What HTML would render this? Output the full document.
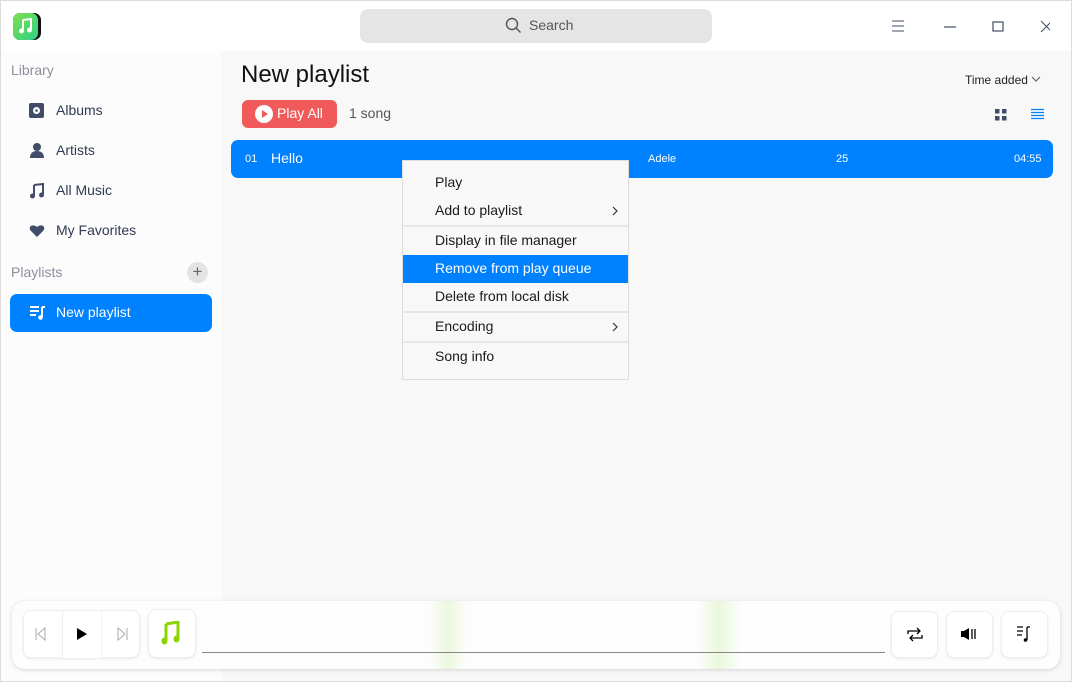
<!DOCTYPE html>
<html><head><meta charset="utf-8"><style>
*{box-sizing:border-box;margin:0;padding:0}
body{width:1072px;height:682px;overflow:hidden;font-family:"Liberation Sans","DejaVu Sans",sans-serif;background:#f8f8f8;position:relative;color:#1a1a1a}
.abs{position:absolute}
.win{position:absolute;left:0;top:0;width:1072px;height:682px;border:1px solid #dcdcdc;pointer-events:none}
.title{left:0;top:0;width:1072px;height:51px;background:#fff}
.side{left:0;top:51px;width:221px;height:631px;background:#fcfcfc}
.nav{left:28px;font-size:14px;color:#414d68;display:flex;align-items:center}
.nav span{position:absolute;left:28px;color:#303a52;white-space:nowrap}
.menu{left:402px;top:160px;width:227px;height:220px;background:#f8f8f8;border:1px solid #ddd;font-size:14px}
.mi{position:absolute;left:32px}
.sep{position:absolute;left:0;width:225px;height:2px;background:#e6e6e6}
.btn{position:absolute;background:#fff;border:1px solid #eee;border-radius:8px;box-shadow:0 1px 2px rgba(0,0,0,.08)}
</style></head><body>
<div class="abs title"></div>
<div class="abs" style="left:13px;top:13px;width:28px;height:27px;border-radius:7px;background:#111"></div>
<div class="abs" style="left:13px;top:13px;width:25px;height:27px;border-radius:7px;background:linear-gradient(135deg,#7ee04a,#2fd08a)"></div>
<svg class="abs" style="left:17px;top:17px" width="18" height="19" viewBox="0 0 18 19"><path d="M6 3v10M6 3l8-1v10" stroke="#fff" stroke-width="2" fill="none"/><circle cx="4.5" cy="14" r="2.5" fill="#fff"/><circle cx="12.5" cy="13" r="2.5" fill="#fff"/></svg>
<div class="abs" style="left:360px;top:9px;width:352px;height:34px;background:#e5e5e5;border-radius:8px"></div>
<svg class="abs" style="left:505px;top:17px" width="17" height="17"><circle cx="7" cy="7" r="5.5" stroke="#555" stroke-width="1.4" fill="none"/><path d="M11 11l4.5 4.5" stroke="#555" stroke-width="1.4"/></svg>
<div class="abs" style="left:529px;top:17px;font-size:14px;color:#555">Search</div>
<svg class="abs" style="left:890px;top:18px" width="160" height="18"><path d="M2 3h12M2 8h12M2 13h12" stroke="#414d68" stroke-width="1"/><path d="M54 9h12" stroke="#414d68" stroke-width="1.2"/><rect x="103" y="4" width="10" height="9" stroke="#414d68" stroke-width="1.2" fill="none"/><path d="M151 3l11 11M162 3l-11 11" stroke="#414d68" stroke-width="1"/></svg>
<div class="abs side"></div>
<div class="abs" style="left:11px;top:62px;font-size:14px;color:#8a909c">Library</div>
<svg class="abs" style="left:29px;top:103px" width="16" height="16"><rect width="15" height="15" rx="2" fill="#414d68"/><circle cx="7.5" cy="7.5" r="3.5" fill="#fff"/><circle cx="7.5" cy="7.5" r="1.3" fill="#414d68"/></svg>
<div class="abs" style="left:56px;top:102px;font-size:14px;color:#303a52">Albums</div>
<svg class="abs" style="left:29px;top:142px" width="16" height="17"><circle cx="8" cy="5" r="4" fill="#414d68"/><path d="M1 16c0-5 3-7 7-7s7 2 7 7z" fill="#414d68"/></svg>
<div class="abs" style="left:56px;top:142px;font-size:14px;color:#303a52">Artists</div>
<svg class="abs" style="left:29px;top:182px" width="16" height="17"><path d="M5 3v10M5 3l9-1v10" stroke="#414d68" stroke-width="2" fill="none"/><circle cx="3.5" cy="14" r="2.5" fill="#414d68"/><circle cx="12.5" cy="13" r="2.5" fill="#414d68"/></svg>
<div class="abs" style="left:56px;top:182px;font-size:14px;color:#303a52">All Music</div>
<svg class="abs" style="left:29px;top:224px" width="16" height="14"><path d="M8 13L1.5 6.5C-1 3 3-1 8 3c5-4 9 0 6.5 3.5z" fill="#414d68"/></svg>
<div class="abs" style="left:56px;top:222px;font-size:14px;color:#303a52">My Favorites</div>
<div class="abs" style="left:11px;top:264px;font-size:14px;color:#8a909c">Playlists</div>
<div class="abs" style="left:187px;top:262px;width:21px;height:21px;border-radius:50%;background:#e4e4e4;color:#666;font-size:17px;line-height:20px;text-align:center">+</div>
<div class="abs" style="left:10px;top:294px;width:202px;height:38px;background:#0081ff;border-radius:7px"></div>
<svg class="abs" style="left:29px;top:305px" width="17" height="16"><path d="M1 2h9M1 6h9M1 10h6" stroke="#fff" stroke-width="2"/><path d="M13 2v10" stroke="#fff" stroke-width="2"/><path d="M13 2h3" stroke="#fff" stroke-width="2"/><circle cx="11.5" cy="12.5" r="2.3" fill="#fff"/></svg>
<div class="abs" style="left:56px;top:304px;font-size:14px;color:#fff">New playlist</div>
<div class="abs" style="left:241px;top:61px;font-size:24px;color:#111">New playlist</div>
<div class="abs" style="left:965px;top:73px;font-size:12px;color:#222">Time added</div>
<svg class="abs" style="left:1031px;top:76px" width="10" height="7"><path d="M1 1l4 4 4-4" stroke="#666" stroke-width="1.2" fill="none"/></svg>
<svg class="abs" style="left:995px;top:108px" width="50" height="14"><rect x="0" y="1" width="4.5" height="4.5" fill="#414d68"/><rect x="7" y="1" width="4.5" height="4.5" fill="#414d68"/><rect x="0" y="8" width="4.5" height="4.5" fill="#414d68"/><rect x="7" y="8" width="4.5" height="4.5" fill="#414d68"/><path d="M36 1.5h13M36 4.5h13M36 7.5h13M36 10.5h13" stroke="#0081ff" stroke-width="1.2"/></svg>
<div class="abs" style="left:242px;top:100px;width:95px;height:28px;background:#f15a5a;border-radius:6px"></div>
<svg class="abs" style="left:255px;top:105px" width="18" height="18"><circle cx="9" cy="9" r="9" fill="#fff"/><path d="M7 5l6 4-6 4z" fill="#f15a5a"/></svg>
<div class="abs" style="left:277px;top:105px;font-size:14px;color:#fff">Play All</div>
<div class="abs" style="left:349px;top:105px;font-size:14px;color:#555">1 song</div>
<div class="abs" style="left:231px;top:140px;width:822px;height:38px;background:#0081ff;border-radius:7px"></div>
<div class="abs" style="left:245px;top:153px;font-size:11px;color:#fff">01</div>
<div class="abs" style="left:271px;top:150px;font-size:14px;color:#fff">Hello</div>
<div class="abs" style="left:648px;top:153px;font-size:11px;color:#fff">Adele</div>
<div class="abs" style="left:836px;top:153px;font-size:11px;color:#fff">25</div>
<div class="abs" style="left:1014px;top:153px;font-size:11px;color:#fff">04:55</div>
<div class="abs menu">
<div class="mi" style="top:13px">Play</div>
<div class="mi" style="top:41px">Add to playlist</div>
<svg class="abs" style="left:208px;top:44px" width="8" height="12"><path d="M2 2l4 4-4 4" stroke="#333" stroke-width="1.2" fill="none"/></svg>
<div class="sep" style="top:64px"></div>
<div class="mi" style="top:71px">Display in file manager</div>
<div class="abs" style="left:0;top:94px;width:225px;height:28px;background:#0081ff"></div>
<div class="mi" style="top:99px;color:#fff">Remove from play queue</div>
<div class="mi" style="top:127px">Delete from local disk</div>
<div class="sep" style="top:150px"></div>
<div class="mi" style="top:157px">Encoding</div>
<svg class="abs" style="left:208px;top:160px" width="8" height="12"><path d="M2 2l4 4-4 4" stroke="#333" stroke-width="1.2" fill="none"/></svg>
<div class="sep" style="top:180px"></div>
<div class="mi" style="top:187px">Song info</div>
</div>
<div class="abs" style="left:12px;top:601px;width:1048px;height:68px;background:#fdfdfd;border-radius:13px;box-shadow:0 1px 4px rgba(0,0,0,.15)"></div>
<div class="abs" style="left:430px;top:601px;width:36px;height:68px;background:linear-gradient(90deg,transparent,#eaf8dc,transparent)"></div>
<div class="abs" style="left:697px;top:601px;width:44px;height:68px;background:linear-gradient(90deg,transparent,#eaf8dc,transparent)"></div>
<div class="btn" style="left:23px;top:610px;width:117px;height:48px"></div>
<div class="abs" style="left:62px;top:611px;width:40px;height:47px;background:#fff;border-left:1px solid #eee;border-right:1px solid #f3f3f3"></div>
<svg class="abs" style="left:34px;top:627px" width="100" height="14"><path d="M2 1v12M11 1L4 7l7 6z" stroke="#aaa" stroke-width="1" fill="none"/><path d="M43 1l10 6-10 6z" fill="#000"/><path d="M84 1l7 6-7 6zM93 1v12" stroke="#aaa" stroke-width="1" fill="none"/></svg>
<div class="btn" style="left:148px;top:609px;width:48px;height:49px"></div>
<svg class="abs" style="left:161px;top:621px" width="22" height="25"><path d="M5 3v16M5 3l12-2v16" stroke="#8ad400" stroke-width="3" fill="none"/><ellipse cx="3.5" cy="20" rx="3" ry="3.5" fill="#8ad400"/><ellipse cx="15.5" cy="18" rx="3" ry="3.5" fill="#8ad400"/></svg>
<div class="abs" style="left:202px;top:652px;width:683px;height:1px;background:#888"></div>
<div class="btn" style="left:891px;top:611px;width:47px;height:47px"></div>
<svg class="abs" style="left:906px;top:626px" width="18" height="17"><path d="M2 8V5h12M11 2l3 3-3 3M16 9v3H4M7 15l-3-3 3-3" stroke="#000" stroke-width="1.3" fill="none"/></svg>
<div class="btn" style="left:946px;top:611px;width:47px;height:47px"></div>
<svg class="abs" style="left:960px;top:627px" width="18" height="14"><path d="M1 4h3l5-3v12l-5-3H1z" fill="#000"/><path d="M12 2v10M15 2v10" stroke="#000" stroke-width="1.3"/></svg>
<div class="btn" style="left:1001px;top:611px;width:47px;height:47px"></div>
<svg class="abs" style="left:1016px;top:625px" width="18" height="18"><path d="M1 2h6M1 6h6M1 10h5M11 2v13M11 2h3" stroke="#000" stroke-width="1.3"/><circle cx="9.5" cy="15" r="1.8" fill="#000"/></svg>
<div class="win"></div>
</body></html>
